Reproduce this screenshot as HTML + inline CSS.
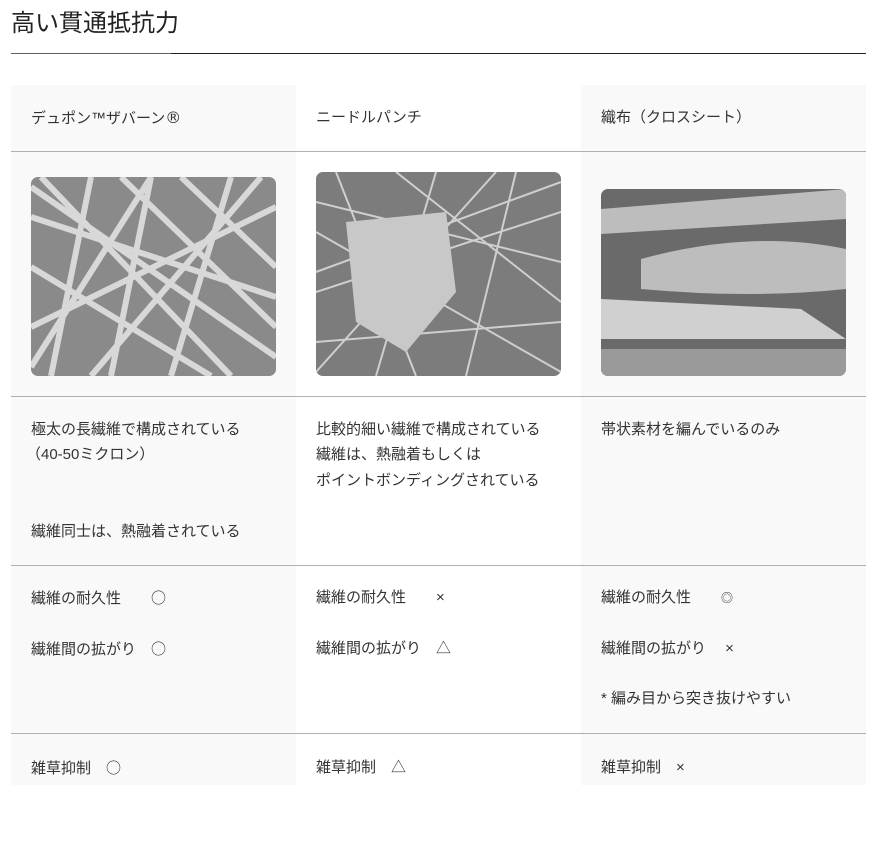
<!DOCTYPE html>
<html><head><meta charset="utf-8"><style>
body{margin:0;width:875px;height:848px;background:#fff;font-family:"Liberation Sans","Noto Sans CJK JP",sans-serif;color:#333;position:relative;overflow:hidden}
.a{position:absolute;white-space:nowrap}
.t{font-size:15px;line-height:18px}
.s{font-family:"Noto Sans CJK JP",sans-serif}
.col{position:absolute;top:85px;height:700px;width:285px}
.g{background:#f9f9f9}
.hl{position:absolute;left:11px;width:855px;height:1px;background:#b0b0b0}
.img{position:absolute;width:245px;border-radius:7px;overflow:hidden}
</style></head><body>
<div class="a" style="left:11px;top:8px;font-size:24px;line-height:32px;color:#222">高い貫通抵抗力</div>
<div class="a" style="left:11px;top:53px;width:855px;height:1px;background:#222"></div>
<div class="a" style="left:11px;top:53px;width:160px;height:1px;background:#3a7a3a"></div>
<div class="col g" style="left:11px"></div>
<div class="col" style="left:296px"></div>
<div class="col g" style="left:581px"></div>
<div class="hl" style="top:151px"></div>
<div class="hl" style="top:396px"></div>
<div class="hl" style="top:565px"></div>
<div class="hl" style="top:733px"></div>

<div class="a t" style="left:31px;top:109px">デュポン™ザバーン<span style="font-family:'DejaVu Sans',sans-serif;font-size:16px">®</span></div>
<div class="a t" style="left:316px;top:109px">ニードルパンチ</div>
<div class="a t" style="left:601px;top:109px">織布（クロスシート）</div>

<div class="img" style="left:31px;top:177px;height:199px;background:#8a8a8a">
<svg width="245" height="199" stroke="#d8d8d8" stroke-width="6" fill="none">
<path d="M0 40L245 120M10 0L200 199M60 0L20 199M120 0L80 199M0 150L245 30M150 0L245 90M0 90L180 199M200 0L140 199M0 10L245 180M90 0L245 150M230 0L60 199M0 190L120 0"/></svg></div>
<div class="img" style="left:316px;top:172px;height:204px;background:#7c7c7c">
<svg width="245" height="204" stroke="#cfcfcf" stroke-width="2" fill="none">
<path d="M0 30L245 90M0 120L245 40M0 170L245 150M20 0L100 204M200 0L150 204M0 60L245 200M80 0L245 130M0 200L180 0M120 0L60 204M245 10L0 100"/>
<path d="M30 50L130 40L140 120L90 180L40 150Z" fill="#c8c8c8" stroke="none"/></svg></div>
<div class="img" style="left:601px;top:189px;height:187px;background:#6a6a6a">
<svg width="245" height="187" fill="#bdbdbd">
<path d="M0 20L245 0L245 30L0 45Z"/><path d="M40 70Q150 40 245 60L245 100Q150 110 40 100Z"/><path d="M0 110L200 120L245 150L0 150Z" fill="#d0d0d0"/><rect x="0" y="160" width="245" height="27" fill="#9a9a9a"/></svg></div>

<div class="a t" style="left:31px;top:421px">極太の長繊維で構成されている</div>
<div class="a t" style="left:26px;top:446px">（40-50ミクロン）</div>
<div class="a t" style="left:31px;top:523px">繊維同士は、熱融着されている</div>
<div class="a t" style="left:316px;top:421px">比較的細い繊維で構成されている</div>
<div class="a t" style="left:316px;top:446px">繊維は、熱融着もしくは</div>
<div class="a t" style="left:316px;top:472px">ポイントボンディングされている</div>
<div class="a t" style="left:601px;top:421px">帯状素材を編んでいるのみ</div>

<div class="a t" style="left:31px;top:589px">繊維の耐久性　　<span class="s">○</span></div>
<div class="a t" style="left:31px;top:640px">繊維間の拡がり　<span class="s">○</span></div>
<div class="a t" style="left:316px;top:589px">繊維の耐久性　　×</div>
<div class="a t" style="left:316px;top:640px">繊維間の拡がり　△</div>
<div class="a t" style="left:601px;top:589px">繊維の耐久性　　<span style="font-size:12px">◎</span></div>
<div class="a t" style="left:601px;top:640px">繊維間の拡がり　 ×</div>
<div class="a t" style="left:601px;top:690px">* 編み目から突き抜けやすい</div>

<div class="a t" style="left:31px;top:759px">雑草抑制　<span class="s">○</span></div>
<div class="a t" style="left:316px;top:759px">雑草抑制　△</div>
<div class="a t" style="left:601px;top:759px">雑草抑制　×</div>
</body></html>
